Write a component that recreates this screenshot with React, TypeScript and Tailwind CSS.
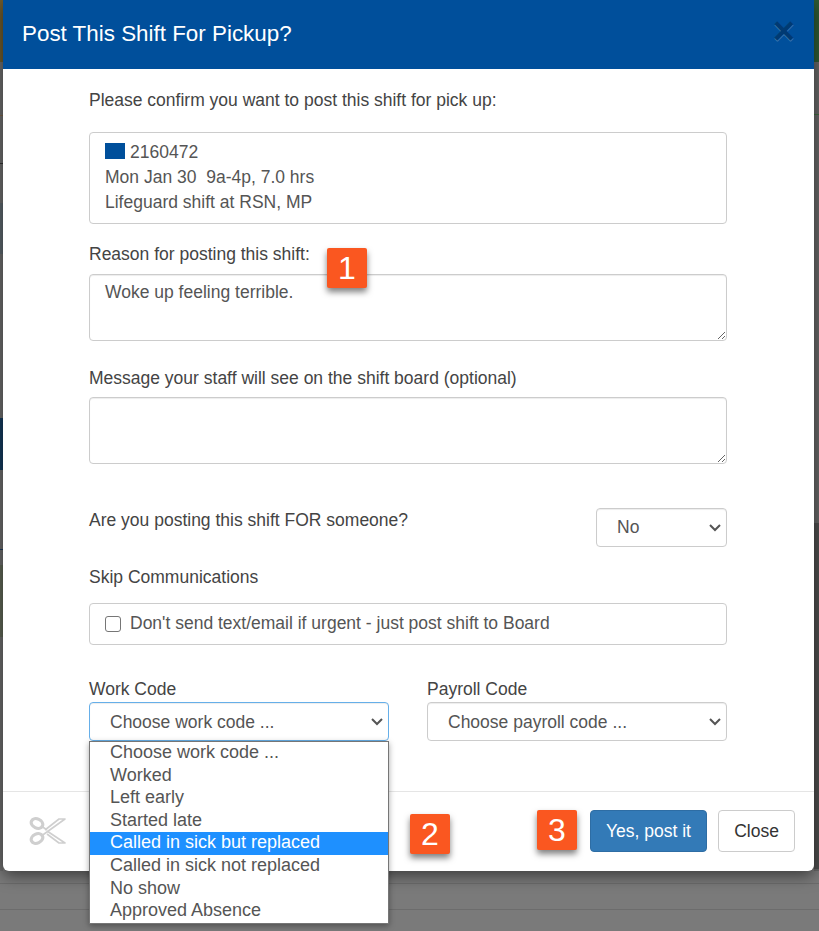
const font = { fontFamily: '"Liberation Sans", Arial, sans-serif' };

function Badge({ n, className }: { n: string; className: string }) {
  return (
    <div className={`absolute flex h-10 w-10 items-center justify-center rounded-[2px] bg-[#fa5720] text-[32px] leading-none text-white shadow-[0_4px_6px_rgba(0,0,0,0.5)] ${className}`}>
      {n}
    </div>
  );
}

const options = [
  'Choose work code ...',
  'Worked',
  'Left early',
  'Started late',
  'Called in sick but replaced',
  'Called in sick not replaced',
  'No show',
  'Approved Absence',
];

function Scissors() {
  return (
    <svg width="38" height="30" viewBox="0 0 38 30" fill="none" stroke="#cfcfcf">
      <ellipse cx="8" cy="7.5" rx="6" ry="4.5" strokeWidth="3.2" transform="rotate(25 8 7.5)" />
      <ellipse cx="8" cy="22.5" rx="6" ry="4.5" strokeWidth="3.2" transform="rotate(-25 8 22.5)" />
      <path d="M13 10.5 L18 14 M13 19.5 L36 3 L30 3 L16 14 M18 15 L36 27 L30 27 L18 18" strokeWidth="1.6" strokeLinejoin="round" />
    </svg>
  );
}

function Chevron() {
  return (
    <svg className="pointer-events-none absolute bottom-[15px] right-[6px]" width="12" height="8" viewBox="0 0 12 8" fill="none" stroke="#555" strokeWidth="2">
      <path d="M1 1 L6 6 L11 1" />
    </svg>
  );
}

const field = 'block w-full rounded-[4px] border border-[#ccc] bg-white text-[#555] shadow-[inset_0_1px_1px_rgba(0,0,0,0.075)]';

export default function App() {
  return (
    <div className="relative h-[931px] w-[819px] overflow-hidden bg-[#7a7a7a] text-[17.5px] leading-[22px] text-[#444]" style={font}>
      {/* page dimmed behind the dialog */}
      <div className="absolute left-0 top-0 flex h-[871px] w-[3px] flex-col bg-[#6c6c6c]">
        <div className="h-[62px] bg-[#6e5a2c]" />
        <div className="mt-[53px] h-px bg-[#7a6248]" />
        <div className="mt-[47px] h-px bg-[#333]" />
        <div className="mt-[39px] h-[51px] bg-[#5c666c]" />
        <div className="mt-[164px] h-[52px] bg-[#143a5c]" />
        <div className="mt-[79px] h-px bg-[#1e3a5c]" />
        <div className="mt-[15px] h-[72px] bg-[#5f6656]" />
      </div>
      <div className="absolute right-0 top-0 flex h-[871px] w-[5px] flex-col bg-[#666]">
        <div className="h-[62px] bg-[#2f5a33]" />
        <div className="mt-[52px] h-px bg-[#3f6b3f]" />
        <div className="mt-[408px] h-[346px] bg-[#4e4e4e]" />
      </div>
      <div className="absolute inset-x-0 top-[883px] h-px bg-[#6c6c6c]" />
      <div className="absolute inset-x-0 top-[909px] h-px bg-[#6c6c6c]" />

      <div className="relative ml-[3px] h-[871px] w-[811px] rounded-b-[6px] bg-white shadow-[0_5px_15px_rgba(0,0,0,0.5)]">
        <header className="flex h-[69px] items-center justify-between bg-[#004f9b] pl-[19px] pr-[19px]">
          <h1 className="-mt-[2px] text-[22.4px] leading-[30px] text-white">Post This Shift For Pickup?</h1>
          <span className="-mt-[8px] text-[38px] font-bold leading-none text-black opacity-25 [text-shadow:0_1px_0_#fff]">×</span>
        </header>

        <main className="pl-[86px] pr-[87px] pt-[20px]">
          <p>Please confirm you want to post this shift for pick up:</p>

          <div className="mt-[21px] h-[92px] rounded-[4px] border border-[#ccc] px-[15px] pt-[7px] text-[#555] leading-[25px]">
            <div className="flex items-center">
              <span className="mb-[3px] mr-[5px] h-[16px] w-[20px] bg-[#004f9b]" />
              2160472
            </div>
            <div className="whitespace-pre">Mon Jan 30  9a-4p, 7.0 hrs</div>
            <div>Lifeguard shift at RSN, MP</div>
          </div>

          <label className="mt-[19px] block">Reason for posting this shift:</label>
          <textarea
            readOnly
            defaultValue="Woke up feeling terrible."
            className={`${field} mt-[9px] h-[67px] px-[15px] py-[6px] outline-none`}
          />

          <label className="mt-[26px] block">Message your staff will see on the shift board (optional)</label>
          <textarea readOnly className={`${field} mt-[8px] h-[67px] outline-none`} />

          <div className="mt-[44px] flex items-start justify-between">
            <span className="mt-[1px]">Are you posting this shift FOR someone?</span>
            <div className="relative w-[131px]">
              <select className={`${field} h-[39px] appearance-none pb-[2px] pl-[20px] pr-[20px] outline-none`} defaultValue="No">
                <option>No</option>
                <option>Yes</option>
              </select>
              <Chevron />
            </div>
          </div>

          <label className="mt-[19px] block">Skip Communications</label>
          <div className="mt-[15px] flex h-[42px] items-center rounded-[4px] border border-[#ccc] px-[15px] pb-[2px] text-[#555]">
            <span className="mr-[9px] mt-[2px] h-[16px] w-[16px] rounded-[3px] border border-[#767676] bg-white" />
            Don't send text/email if urgent - just post shift to Board
          </div>

          <div className="mt-[33px] grid grid-cols-[300px_300px] justify-between">
            <div className="relative">
              <label className="block">Work Code</label>
              <select className={`${field} mt-[2px] h-[39px] appearance-none pl-[20px] pr-[20px] !border-[#66afe9] shadow-[inset_0_1px_1px_rgba(0,0,0,0.075),0_0_8px_rgba(102,175,233,0.6)] outline-none`}>
                <option>Choose work code ...</option>
              </select>
              <Chevron />
            </div>
            <div className="relative">
              <label className="block">Payroll Code</label>
              <select className={`${field} mt-[2px] h-[39px] appearance-none pl-[20px] pr-[20px] outline-none`}>
                <option>Choose payroll code ...</option>
              </select>
              <Chevron />
            </div>
          </div>
        </main>

        <footer className="absolute inset-x-0 bottom-0 flex h-[80px] items-center border-t border-[#e5e5e5] pb-[2px] pl-[26px] pr-[19px]">
          <Scissors />
          <div className="ml-auto flex gap-[11px]">
            <button className="h-[42px] w-[117px] rounded-[4px] border border-[#2e6da4] bg-[#337ab7] text-white">Yes, post it</button>
            <button className="h-[42px] w-[77px] rounded-[4px] border border-[#ccc] bg-white text-[#333]">Close</button>
          </div>
        </footer>
      </div>

      <div className="absolute left-[89px] top-[741px] h-[183px] w-[300px] border border-[#767676] bg-white pl-[20px] text-[18px] text-[#555] leading-[22.6px] shadow-[0_2px_6px_rgba(0,0,0,0.35)]">
        {options.map((o) => (
          <div key={o} className={o === 'Called in sick but replaced' ? '-ml-[20px] bg-[#1e90ff] pl-[20px] text-white' : ''}>
            <span className="relative -top-px">{o}</span>
          </div>
        ))}
      </div>

      <Badge n="1" className="left-[327px] top-[248px]" />
      <Badge n="2" className="left-[410px] top-[814px]" />
      <Badge n="3" className="left-[537px] top-[810px]" />
    </div>
  );
}
